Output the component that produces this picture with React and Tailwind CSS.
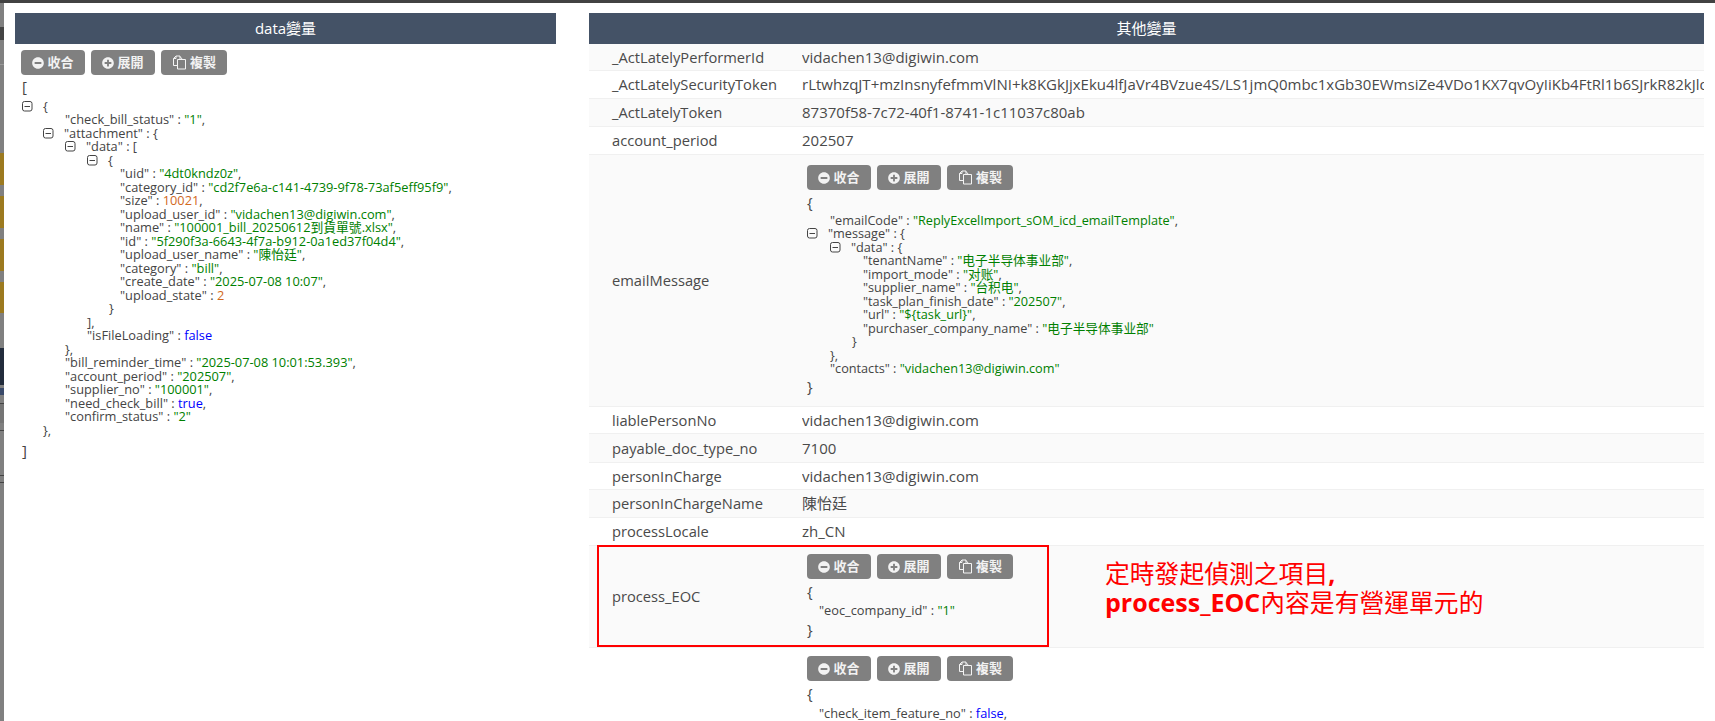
import React from "react";
import { FaMinusCircle, FaPlusCircle } from "react-icons/fa";

const S = ({ children }) => <span className="text-[#008000]">{children}</span>;
const N = ({ children }) => <span className="text-[#d2691e]">{children}</span>;
const B = ({ children }) => <span className="text-[#0000ff]">{children}</span>;

const CopyIcon = () => (
  <svg width="15" height="15" viewBox="0 0 15 15" fill="none" stroke="#f4f4f4" strokeWidth="1" className="shrink-0">
    <path d="M5 10.5H1.5V3.5L4 1H8V4.5" />
    <path d="M4 1V3.5H1.5" />
    <path d="M5.5 4.5H13.5V14H5.5Z" />
    <path d="M8 1.5L10.5 4.5" />
  </svg>
);

const Btn = ({ icon, label, w }) => (
  <div className={`${w} h-[25px] rounded-[4px] bg-[#808080] text-[#f2f2f2] text-[13px] font-bold flex items-center justify-center gap-[3px]`}>
    {icon}
    <span>{label}</span>
  </div>
);

const Buttons = () => (
  <div className="flex gap-[6px]">
    <Btn w="w-[64px]" icon={<FaMinusCircle size={12} />} label="收合" />
    <Btn w="w-[64px]" icon={<FaPlusCircle size={12} />} label="展開" />
    <Btn w="w-[66px]" icon={<CopyIcon />} label="複製" />
  </div>
);

const Toggle = () => (
  <svg width="21" height="11" viewBox="0 0 21 11" fill="none" stroke="#444" strokeWidth="1" className="shrink-0">
    <rect x="0.5" y="0.5" width="9.5" height="9.5" rx="2" />
    <path d="M2.5 5.5H8" />
  </svg>
);

const L = ({ cls = "", t, children }) => (
  <div className={`flex items-center h-[13.5px] leading-[13.5px] whitespace-pre ${cls}`}>
    {t && <Toggle />}
    <span>{children}</span>
  </div>
);

const DataJson = () => (
  <div className="pl-[7px] pt-[1.5px] text-[12.8px] text-[#444]">
    <div className="h-[19px] leading-[19px] text-[15px]">[</div>
    <L cls="mt-[4px]" t>{"{"}</L>
    <L cls="pl-[43px]">"check_bill_status" : <S>"1"</S>,</L>
    <L cls="pl-[21px]" t>"attachment" : {"{"}</L>
    <L cls="pl-[43px]" t>"data" : [</L>
    <L cls="pl-[65px]" t>{"{"}</L>
    <L cls="pl-[98px]">"uid" : <S>"4dt0kndz0z"</S>,</L>
    <L cls="pl-[98px]">"category_id" : <S>"cd2f7e6a-c141-4739-9f78-73af5eff95f9"</S>,</L>
    <L cls="pl-[98px]">"size" : <N>10021</N>,</L>
    <L cls="pl-[98px]">"upload_user_id" : <S>"vidachen13@digiwin.com"</S>,</L>
    <L cls="pl-[98px]">"name" : <S>"100001_bill_20250612到貨單號.xlsx"</S>,</L>
    <L cls="pl-[98px]">"id" : <S>"5f290f3a-6643-4f7a-b912-0a1ed37f04d4"</S>,</L>
    <L cls="pl-[98px]">"upload_user_name" : <S>"陳怡廷"</S>,</L>
    <L cls="pl-[98px]">"category" : <S>"bill"</S>,</L>
    <L cls="pl-[98px]">"create_date" : <S>"2025-07-08 10:07"</S>,</L>
    <L cls="pl-[98px]">"upload_state" : <N>2</N></L>
    <L cls="pl-[87px]">{"}"}</L>
    <L cls="pl-[65px]">],</L>
    <L cls="pl-[65px]">"isFileLoading" : <B>false</B></L>
    <L cls="pl-[43px]">{"},"}</L>
    <L cls="pl-[43px]">"bill_reminder_time" : <S>"2025-07-08 10:01:53.393"</S>,</L>
    <L cls="pl-[43px]">"account_period" : <S>"202507"</S>,</L>
    <L cls="pl-[43px]">"supplier_no" : <S>"100001"</S>,</L>
    <L cls="pl-[43px]">"need_check_bill" : <B>true</B>,</L>
    <L cls="pl-[43px]">"confirm_status" : <S>"2"</S></L>
    <L cls="pl-[21px]">{"},"}</L>
    <div className="mt-[3.5px] h-[19px] leading-[19px] text-[15px]">]</div>
  </div>
);

const EmailJson = () => (
  <div className="pt-[2.5px] text-[12.7px] text-[#444]">
    <div className="h-[19px] leading-[19px] text-[15px]">{"{"}</div>
    <L cls="pl-[23px] mt-[2px]">"emailCode" : <S>"ReplyExcelImport_sOM_icd_emailTemplate"</S>,</L>
    <L t>"message" : {"{"}</L>
    <L cls="pl-[23px]" t>"data" : {"{"}</L>
    <L cls="pl-[56px]">"tenantName" : <S>"电子半导体事业部"</S>,</L>
    <L cls="pl-[56px]">"import_mode" : <S>"对账"</S>,</L>
    <L cls="pl-[56px]">"supplier_name" : <S>"台积电"</S>,</L>
    <L cls="pl-[56px]">"task_plan_finish_date" : <S>"202507"</S>,</L>
    <L cls="pl-[56px]">"url" : <S>{'"${task_url}"'}</S>,</L>
    <L cls="pl-[56px]">"purchaser_company_name" : <S>"电子半导体事业部"</S></L>
    <L cls="pl-[45px]">{"}"}</L>
    <L cls="pl-[23px]">{"},"}</L>
    <L cls="pl-[23px]">"contacts" : <S>"vidachen13@digiwin.com"</S></L>
    <div className="mt-[1.5px] h-[19px] leading-[19px] text-[15px]">{"}"}</div>
  </div>
);

const EocJson = () => (
  <div className="pt-[2.5px] text-[12.8px] text-[#444]">
    <div className="h-[19px] leading-[19px] text-[15px]">{"{"}</div>
    <div className="h-[19px] leading-[19px] pl-[12px] whitespace-pre">"eoc_company_id" : <S>"1"</S></div>
    <div className="h-[19px] leading-[19px] text-[15px]">{"}"}</div>
  </div>
);

const LastJson = () => (
  <div className="pt-[2.5px] text-[12.8px] text-[#444]">
    <div className="h-[19px] leading-[19px] text-[15px]">{"{"}</div>
    <div className="mt-[1px] h-[19px] leading-[19px] pl-[12px] whitespace-pre">"check_item_feature_no" : <B>false</B>,</div>
  </div>
);

const Row = ({ name, cls = "h-[28px]", odd, children }) => (
  <div className={`flex items-center border-b border-[#f0f0f0] ${cls} ${odd ? "bg-[#fafafa]" : "bg-white"}`}>
    <div className="w-[213px] shrink-0 pl-[23px] whitespace-nowrap">{name}</div>
    <div className="flex-1 min-w-0 overflow-hidden whitespace-nowrap text-[15px]">{children}</div>
  </div>
);

const JsonCell = ({ children }) => (
  <div className="pl-[5px]">
    <Buttons />
    {children}
  </div>
);

const Header = ({ children }) => (
  <div className="h-[31px] bg-[#445266] text-white text-[15px] flex items-center justify-center">{children}</div>
);

const Strip = () => (
  <div className="w-[4px] shrink-0 bg-[#808080] flex flex-col">
    <div className="h-[24px]" />
    <div className="h-[13px] bg-[#444]" />
    <div className="h-[24px]" />
    <div className="h-[1px] bg-[#999]" />
    <div className="h-[88px]" />
    <div className="h-[32px] bg-[#9c7a20]" />
    <div className="h-[11px]" />
    <div className="h-[32px] bg-[#9c7a20]" />
    <div className="h-[11px]" />
    <div className="h-[32px] bg-[#9c7a20]" />
    <div className="h-[11px]" />
    <div className="h-[31px] bg-[#9c7a20]" />
    <div className="h-[35px]" />
    <div className="h-[37px] bg-[#222c3c]" />
    <div className="h-[3px]" />
    <div className="h-[7px] bg-[#3a4a6a]" />
    <div className="h-[8px]" />
    <div className="h-[20px] bg-[#757575] border-t border-[#444]" />
    <div className="h-[7px]" />
    <div className="h-[1px] bg-[#444]" />
    <div className="h-[44px]" />
    <div className="h-[1px] bg-[#444]" />
    <div className="h-[6px]" />
    <div className="h-[1px] bg-[#444]" />
  </div>
);

export default function App() {
  return (
    <div className="relative h-[721px] w-[1715px] overflow-hidden bg-white flex flex-col font-['Open_Sans','Noto_Sans_CJK_TC',sans-serif] text-[14.7px] text-[#4a4a4a]">
      <div className="h-[3px] shrink-0 bg-[#424242]" />
      <div className="flex flex-1 min-h-0">
        <Strip />
        <div className="flex-1 min-w-0 flex pl-[11px] pr-[11px] pt-[10px] gap-[33px]">
          <div className="w-[541px] shrink-0">
            <Header>data變量</Header>
            <div className="pl-[6px] pt-[6px]">
              <Buttons />
            </div>
            <DataJson />
          </div>
          <div className="flex-1 min-w-0">
            <Header>其他變量</Header>
            <Row name="_ActLatelyPerformerId" odd cls="h-[27px]">vidachen13@digiwin.com</Row>
            <Row name="_ActLatelySecurityToken">rLtwhzqJT+mzInsnyfefmmVlNI+k8KGkJjxEku4lfJaVr4BVzue4S/LS1jmQ0mbc1xGb30EWmsiZe4VDo1KX7qvOyIiKb4FtRl1b6SJrkR82kJlqw8TzYd</Row>
            <Row name="_ActLatelyToken" odd>87370f58-7c72-40f1-8741-1c11037c80ab</Row>
            <Row name="account_period">202507</Row>
            <Row name="emailMessage" odd cls="h-[252px]">
              <JsonCell><EmailJson /></JsonCell>
            </Row>
            <Row name="liablePersonNo" cls="h-[27px]">vidachen13@digiwin.com</Row>
            <Row name="payable_doc_type_no" odd cls="h-[29px]">7100</Row>
            <Row name="personInCharge" cls="h-[27px]">vidachen13@digiwin.com</Row>
            <Row name="personInChargeName" odd>陳怡廷</Row>
            <Row name="processLocale">zh_CN</Row>
            <Row name="process_EOC" odd cls="h-[102px]">
              <JsonCell><EocJson /></JsonCell>
            </Row>
            <div className="flex bg-white pt-[8px]">
              <div className="w-[213px] shrink-0" />
              <JsonCell><LastJson /></JsonCell>
            </div>
          </div>
        </div>
      </div>
      <div className="absolute left-[597px] top-[545px] w-[452px] h-[102px] border-2 border-[#ff0000]" />
      <div className="absolute left-[1105px] top-[559px] text-[#ff0000] text-[24.8px] leading-[29px] whitespace-pre">
        <div>定時發起偵測之項目<span className="font-bold">,</span></div>
        <div><span className="font-bold text-[25px]">process_EOC</span>內容是有營運單元的</div>
      </div>
    </div>
  );
}
